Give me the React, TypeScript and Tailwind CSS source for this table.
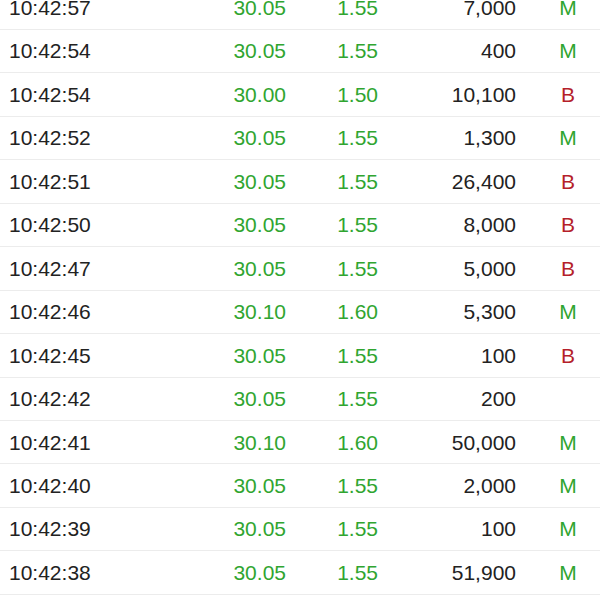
import React from "react";

const G = "text-[#30a530]";
const R = "text-[#b51f2b]";

const rows: [string, string, string, string, string][] = [
  ["10:42:57", "30.05", "1.55", "7,000", "M"],
  ["10:42:54", "30.05", "1.55", "400", "M"],
  ["10:42:54", "30.00", "1.50", "10,100", "B"],
  ["10:42:52", "30.05", "1.55", "1,300", "M"],
  ["10:42:51", "30.05", "1.55", "26,400", "B"],
  ["10:42:50", "30.05", "1.55", "8,000", "B"],
  ["10:42:47", "30.05", "1.55", "5,000", "B"],
  ["10:42:46", "30.10", "1.60", "5,300", "M"],
  ["10:42:45", "30.05", "1.55", "100", "B"],
  ["10:42:42", "30.05", "1.55", "200", ""],
  ["10:42:41", "30.10", "1.60", "50,000", "M"],
  ["10:42:40", "30.05", "1.55", "2,000", "M"],
  ["10:42:39", "30.05", "1.55", "100", "M"],
  ["10:42:38", "30.05", "1.55", "51,900", "M"],
  ["10:42:37", "30.05", "1.55", "1,000", "M"],
];

export default function App() {
  return (
    <div
      className="w-[600px] h-[600px] overflow-hidden bg-white text-[21px] text-[#222]"
      style={{ fontFamily: '"Liberation Sans", Arial, sans-serif' }}
    >
      <div className="mt-[-13.5px]">
        {rows.map((r, i) => (
          <div
            key={i}
            className="flex items-center h-[43.46px] border-b border-[#ececec]"
          >
            <div className="w-[200px] pl-[9px]">{r[0]}</div>
            <div className={`w-[86px] text-right ${G}`}>{r[1]}</div>
            <div className={`w-[92px] text-right ${G}`}>{r[2]}</div>
            <div className="w-[138px] text-right">{r[3]}</div>
            <div
              className={`ml-[26px] w-[52px] text-center ${r[4] === "B" ? R : G}`}
            >
              {r[4]}
            </div>
          </div>
        ))}
      </div>
    </div>
  );
}
